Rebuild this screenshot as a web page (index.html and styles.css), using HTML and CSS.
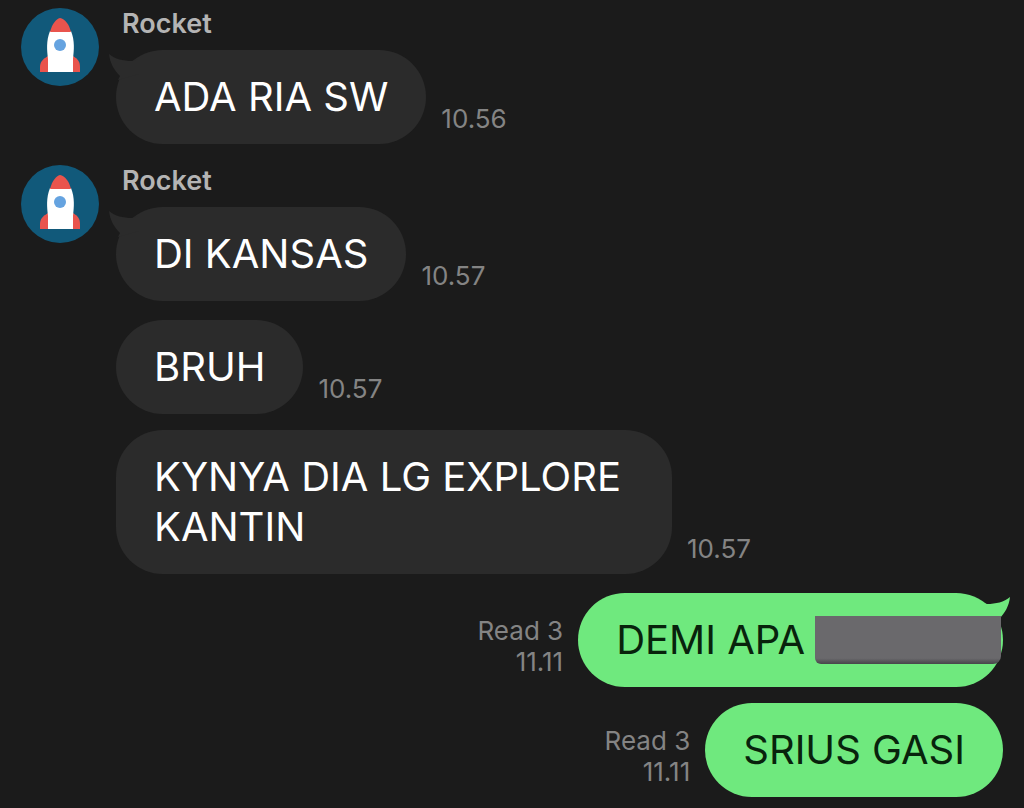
FILE: index.html
```html
<!DOCTYPE html>
<html lang="id">
<head>
  <meta charset="UTF-8" />
  <meta name="viewport" content="width=device-width, initial-scale=1.0"/>
  <title>Chat</title>
  <link rel="stylesheet" href="styles.css">
</head>
<body>

  <svg class="defs" aria-hidden="true">
    <symbol id="rocket" viewBox="0 0 78 78">
      <circle cx="39" cy="39" r="39" fill="#11597a"/>
      <path d="M27 48 C22 51 19 54 19 59 V64 H59 V59 C59 54 57 51 52 48 Z" fill="#e9544d"/>
      <path d="M29 23 C25 33 26 42 27 51 V64 H52 V51 C53 42 54 33 50 23 Z" fill="#fff"/>
      <path d="M29 24 C31 16 35 11 39 10 C44 11 48 16 50 24 Z" fill="#e9544d"/>
      <circle cx="39" cy="37" r="6" fill="#65a3e0"/>
    </symbol>
    <symbol id="tail" viewBox="0 0 36 30">
      <path d="M0 0 C6 5 14 7 23 7 L30 5 L30 20 L9 26 L11 22 C5 16 1 9 0 0 Z"/>
    </symbol>
  </svg>

  <main class="chat">
    <div class="message first">
      <svg class="avatar" role="img" aria-label="Rocket"><use href="#rocket"/></svg>
      <div class="content">
        <div class="name">Rocket</div>
        <div class="row">
          <div class="bubble"><svg class="tail"><use href="#tail"/></svg>ADA RIA SW</div>
          <div class="meta">10.56</div>
        </div>
      </div>
    </div>

    <div class="message first">
      <svg class="avatar" role="img" aria-label="Rocket"><use href="#rocket"/></svg>
      <div class="content">
        <div class="name">Rocket</div>
        <div class="row">
          <div class="bubble"><svg class="tail"><use href="#tail"/></svg>DI KANSAS</div>
          <div class="meta">10.57</div>
        </div>
      </div>
    </div>

    <div class="message next spaced">
      <div class="row">
        <div class="bubble">BRUH</div>
        <div class="meta">10.57</div>
      </div>
    </div>

    <div class="message next">
      <div class="row">
        <div class="bubble">KYNYA DIA LG EXPLORE KANTIN</div>
        <div class="meta">10.57</div>
      </div>
    </div>

    <div class="message sent spaced">
      <div class="row">
        <div class="meta">Read 3<br>11.11</div>
        <div class="bubble censored"><svg class="tail"><use href="#tail"/></svg>DEMI APA<span class="redacted"></span></div>
      </div>
    </div>

    <div class="message sent">
      <div class="row">
        <div class="meta">Read 3<br>11.11</div>
        <div class="bubble">SRIUS GASI</div>
      </div>
    </div>
  </main>

</body>
</html>
```

FILE: styles.css
```css
* {
  box-sizing: border-box;
}

body {
  margin: 0;
  background: #1b1b1b;
  font-family: Inter, "Liberation Sans", sans-serif;
}

.defs {
  display: none;
}

.chat {
  padding: 8px 21px 10px;
}

.message {
  display: flex;
  margin-top: 16px;
}

.message.first {
  margin-top: 21px;
}

.message.spaced {
  margin-top: 19px;
}

.message:first-child {
  margin-top: 0;
}

.message.next {
  padding-left: 95px;
}

.message.sent {
  justify-content: flex-end;
}

.avatar {
  flex: none;
  width: 78px;
  height: 78px;
  margin-right: 17px;
}

.name {
  padding-left: 6px;
  margin-bottom: 10px;
  color: #b4b4b4;
  font-size: 27px;
  font-weight: 600;
  line-height: 32px;
}

.row {
  display: flex;
  align-items: flex-end;
  gap: 15px;
}

.bubble {
  position: relative;
  max-width: 556px;
  padding: 22px 38px;
  border-radius: 47px;
  background: #2b2b2b;
  color: #fff;
  font-size: 40px;
  line-height: 50px;
}

.sent .bubble {
  background: #6fe97e;
  color: #08230c;
}

.meta {
  flex: none;
  padding-bottom: 10px;
  color: #848484;
  font-size: 26px;
  line-height: 31px;
}

.sent .meta {
  text-align: right;
}

/* little curl that points at the sender */
.tail {
  position: absolute;
  top: 4px;
  left: -7px;
  width: 36px;
  height: 30px;
  fill: #2b2b2b;
}

.sent .tail {
  left: auto;
  right: -7px;
  fill: #6fe97e;
  transform: scaleX(-1);
}

.censored {
  display: flex;
  align-items: center;
  gap: 10px;
}

.sent .censored {
  padding-right: 2px;
}

.redacted {
  z-index: 1;
  width: 186px;
  height: 48px;
  border-radius: 0 0 8px 6px;
  background: linear-gradient(#6a696c 88%, #47464a);
}
```
